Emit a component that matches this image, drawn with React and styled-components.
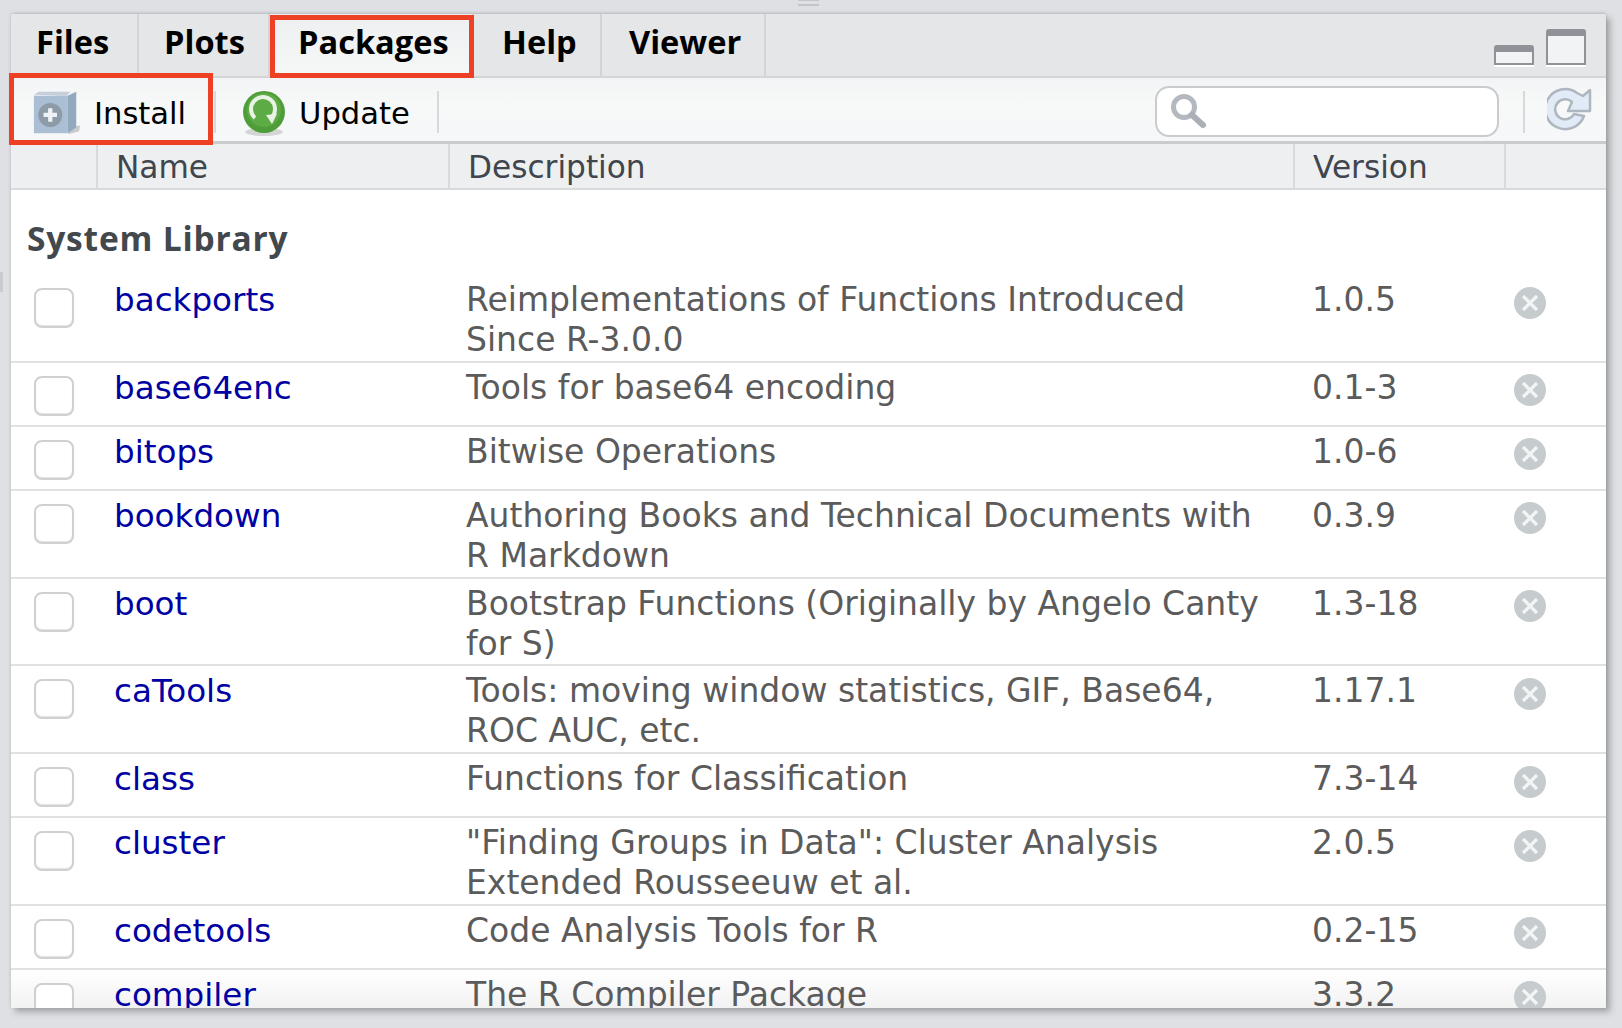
import React from "react";
import styled, { createGlobalStyle } from "styled-components";

const GlobalStyle = createGlobalStyle`
  html, body {
    margin: 0;
    padding: 0;
    background: #dfe0e3;
  }
`;

const FONT = `"DejaVu Sans", "Liberation Sans", sans-serif`;
const COLUMNS = "87px 352px 845px 211px 1fr";

const Page = styled.div`
  position: relative;
  width: 1622px;
  height: 1028px;
  box-sizing: border-box;
  padding: 14px 16px 20px 11px;
  background: #dfe0e3;
  overflow: hidden;
`;

const Grip = styled.div`
  position: absolute;
  top: 0;
  left: 798px;
  width: 21px;
  height: 6px;
  border-top: 1px solid #c3c5c9;
  border-bottom: 2px solid #c3c5c9;
  box-sizing: border-box;
`;

const EdgeMark = styled.div`
  position: absolute;
  top: 272px;
  left: 0;
  width: 3px;
  height: 20px;
  background: #c9cbcf;
`;

const Panel = styled.div`
  position: relative;
  height: 100%;
  display: flex;
  flex-direction: column;
  background: #fff;
  border-radius: 3px 3px 0 0;
  box-shadow: 4px 4px 6px rgba(90, 92, 98, 0.45), 0 -1px 3px rgba(120, 122, 128, 0.35);
  font-family: ${FONT};
`;

const TabStrip = styled.div`
  flex: none;
  height: 62px;
  display: flex;
  align-items: stretch;
  background: #e5e6e8;
  border-radius: 3px 3px 0 0;
  border-bottom: 2px solid #d3d5d8;
`;

const Tab = styled.div`
  width: ${({ $w }) => $w}px;
  box-sizing: border-box;
  padding-left: ${({ $pad }) => $pad}px;
  padding-top: 8px;
  font-family: "Open Sans", ${FONT};
  font-size: 32.6px;
  line-height: 40px;
  font-weight: 700;
  color: #000;
  border-right: 2px solid #d2d4d7;
  background: ${({ $active }) =>
    $active ? "linear-gradient(#eeeff0, #f6f7f7)" : "transparent"};
`;

const TabTools = styled.div`
  margin-left: auto;
  padding: 15px 20px 0 0;
  display: flex;
  align-items: flex-end;
  gap: 12px;
  height: 36px;
`;

const PaneButton = styled.div`
  width: 40px;
  height: ${({ $h }) => $h}px;
  box-sizing: border-box;
  border: 2px solid #8f9296;
  border-top-width: 7px;
  border-radius: 3px 3px 0 0;
  background: #f2f3f4;
  box-shadow: 0 2px 0 #fff;
`;

const Toolbar = styled.div`
  flex: none;
  height: 66px;
  box-sizing: border-box;
  padding-right: 13px;
  display: flex;
  align-items: center;
  background: linear-gradient(#f3f4f5, #f7f8f8 40%, #f6f7f8);
  border-bottom: 3px solid #c9cbce;
`;

const ToolButton = styled.div`
  width: ${({ $w }) => $w}px;
  box-sizing: border-box;
  height: 100%;
  padding-left: ${({ $pad }) => $pad}px;
  padding-top: 7px;
  display: flex;
  align-items: center;
  gap: ${({ $gap }) => $gap}px;
  font-size: 30.6px;
  color: #000;
`;

const ToolDivider = styled.div`
  flex: none;
  width: 2px;
  height: ${({ $h }) => $h}px;
  margin-top: 4px;
  background: #d6d8da;
`;

const SearchBox = styled.div`
  margin-left: auto;
  margin-top: 3px;
  width: 344px;
  height: 51px;
  box-sizing: border-box;
  padding-left: 12px;
  display: flex;
  align-items: center;
  background: #fff;
  border: 2px solid #c9ccce;
  border-radius: 14px;
`;

const RefreshSlot = styled.div`
  margin-left: 24px;
  display: flex;
  align-items: center;
  gap: 22px;
`;

const HeaderRow = styled.div`
  flex: none;
  height: 44px;
  display: grid;
  grid-template-columns: ${COLUMNS};
  background: #eeeff0;
  border-bottom: 2px solid #d8dadc;
  font-size: 31.2px;
  line-height: 40px;
  color: #3f464d;
`;

const HeaderCell = styled.div`
  box-sizing: border-box;
  padding-left: ${({ $pad }) => $pad}px;
  padding-top: 3px;
  border-right: 2px solid #d8dadc;
`;

const Body = styled.div`
  flex: 1;
  min-height: 0;
  overflow: hidden;
`;

const GroupTitle = styled.div`
  height: 85px;
  box-sizing: border-box;
  padding: 26px 0 0 16px;
  font-family: "Open Sans", ${FONT};
  font-size: 33.5px;
  line-height: 44px;
  font-weight: 700;
  letter-spacing: 0.8px;
  color: #43484d;
`;

const Row = styled.div`
  position: relative;
  display: grid;
  grid-template-columns: ${COLUMNS};
  min-height: 64px;
  box-sizing: border-box;
  padding-top: 5px;
  padding-bottom: 0.8px;
  border-bottom: 2px solid #e0e1e2;
  font-size: 33px;
  line-height: 40px;
  background: ${({ $fade }) => ($fade ? "linear-gradient(#fff, #f2f2f3 38px)" : "#fff")};
`;

const CheckCell = styled.div`
  padding: 8px 0 0 23px;
`;

const CheckBox = styled.div`
  width: 40px;
  height: 40px;
  box-sizing: border-box;
  background: #fff;
  border: 2px solid #cfd0d1;
  border-radius: 8px;
  box-shadow: inset 0 -1px 1px #e4e4e4;
`;

const PackageLink = styled.a`
  padding-left: 16px;
  font-size: 32.6px;
  color: #0000a3;
  text-decoration: none;
`;

const Description = styled.div`
  padding-left: 16px;
  color: #5b5b5b;
  white-space: pre-line;
`;

const Version = styled.div`
  padding-left: 17px;
  color: #5b5b5b;
`;

const RemoveCell = styled.div`
  padding: 6.5px 0 0 8px;
`;

const Callout = styled.div`
  position: absolute;
  box-sizing: border-box;
  left: ${({ $x }) => $x}px;
  top: ${({ $y }) => $y}px;
  width: ${({ $w }) => $w}px;
  height: ${({ $h }) => $h}px;
  border: 5px solid #ee4024;
  pointer-events: none;
`;

const packages = [
  ["backports", "Reimplementations of Functions Introduced\nSince R-3.0.0", "1.0.5"],
  ["base64enc", "Tools for base64 encoding", "0.1-3"],
  ["bitops", "Bitwise Operations", "1.0-6"],
  ["bookdown", "Authoring Books and Technical Documents with\nR Markdown", "0.3.9"],
  ["boot", "Bootstrap Functions (Originally by Angelo Canty\nfor S)", "1.3-18"],
  ["caTools", "Tools: moving window statistics, GIF, Base64,\nROC AUC, etc.", "1.17.1"],
  ["class", "Functions for Classification", "7.3-14"],
  ["cluster", "\"Finding Groups in Data\": Cluster Analysis\nExtended Rousseeuw et al.", "2.0.5"],
  ["codetools", "Code Analysis Tools for R", "0.2-15"],
  ["compiler", "The R Compiler Package", "3.3.2"],
];

const InstallIcon = () => (
  <svg width="50" height="46" viewBox="0 0 52 46">
    <path d="M38 38 L50 36 L49 42 L38 45 Z" fill="#b5b7b9" opacity="0.7" />
    <path d="M2 4 L7 1 L40 1 L36 5 Z" fill="#c4cfda" />
    <rect x="2" y="5" width="35" height="39" fill="#aabfd3" />
    <path d="M37 5 L46 1 L46 38 L37 44 Z" fill="#93a9bd" />
    <circle cx="19" cy="25" r="12.5" fill="#8d9aa7" />
    <path d="M19 18 V32 M12 25 H26" stroke="#eef2f5" strokeWidth="4.5" />
  </svg>
);

const UpdateIcon = () => (
  <svg width="46" height="48" viewBox="0 0 46 48">
    <ellipse cx="23" cy="43" rx="19" ry="4" fill="#bcbfbc" opacity="0.6" />
    <circle cx="23" cy="23" r="21" fill="#4f9d3a" />
    <circle cx="23" cy="21" r="17" fill="#5cab45" />
    <path d="M14 29 A12 12 0 1 1 31 28" fill="none" stroke="#e8f3e4" strokeWidth="4" />
    <path d="M25 26 L36 25 L31 35 Z" fill="#e8f3e4" />
  </svg>
);

const SearchIcon = () => (
  <svg width="38" height="38" viewBox="0 0 38 38">
    <circle cx="15" cy="15" r="10.5" fill="none" stroke="#b3b9bf" strokeWidth="5" />
    <path d="M23 23 L34 33" stroke="#aab0b6" strokeWidth="6" strokeLinecap="round" />
  </svg>
);

const RefreshIcon = () => (
  <svg width="46" height="46" viewBox="0 0 46 46">
    <path
      d="M30 6 L36 9 L43 3 V24 H21 L25 15 A10 10 0 1 0 27 27 L37 29 A20 20 0 1 1 30 6 Z"
      fill="#e0ebf7"
      stroke="#aeb7c0"
      strokeWidth="2.5"
      strokeLinejoin="round"
    />
  </svg>
);

const RemoveIcon = () => (
  <svg width="32" height="32" viewBox="0 0 32 32">
    <circle cx="16" cy="16" r="16" fill="#c6cbce" />
    <path d="M9 9 L23 23 M23 9 L9 23" stroke="#f2f4f5" strokeWidth="3.2" />
  </svg>
);

const App = () => (
  <Page>
    <GlobalStyle />
    <Grip />
    <EdgeMark />
    <Panel>
      <TabStrip>
        <Tab $w={128} $pad={25}>Files</Tab>
        <Tab $w={131} $pad={25}>Plots</Tab>
        <Tab $w={204} $pad={28} $active>Packages</Tab>
        <Tab $w={128} $pad={28}>Help</Tab>
        <Tab $w={164} $pad={27}>Viewer</Tab>
        <TabTools>
          <PaneButton $h={20} />
          <PaneButton $h={36} />
        </TabTools>
      </TabStrip>
      <Toolbar>
        <ToolButton $w={203} $pad={21} $gap={12}>
          <InstallIcon />
          Install
        </ToolButton>
        <ToolDivider $h={42} />
        <ToolButton $w={221} $pad={25} $gap={12}>
          <UpdateIcon />
          Update
        </ToolButton>
        <ToolDivider $h={42} />
        <SearchBox>
          <SearchIcon />
        </SearchBox>
        <RefreshSlot>
          <ToolDivider $h={42} />
          <RefreshIcon />
        </RefreshSlot>
      </Toolbar>
      <HeaderRow>
        <HeaderCell />
        <HeaderCell $pad={18}>Name</HeaderCell>
        <HeaderCell $pad={18}>Description</HeaderCell>
        <HeaderCell $pad={18}>Version</HeaderCell>
        <div />
      </HeaderRow>
      <Body>
        <GroupTitle>System Library</GroupTitle>
        {packages.map(([name, description, version], index) => (
          <Row key={name} $fade={index === packages.length - 1}>
            <CheckCell>
              <CheckBox />
            </CheckCell>
            <PackageLink>{name}</PackageLink>
            <Description>{description}</Description>
            <Version>{version}</Version>
            <RemoveCell>
              <RemoveIcon />
            </RemoveCell>
          </Row>
        ))}
      </Body>
      <Callout $x={259} $y={1} $w={204} $h={63} />
      <Callout $x={-2} $y={59} $w={204} $h={72} />
    </Panel>
  </Page>
);

export default App;
